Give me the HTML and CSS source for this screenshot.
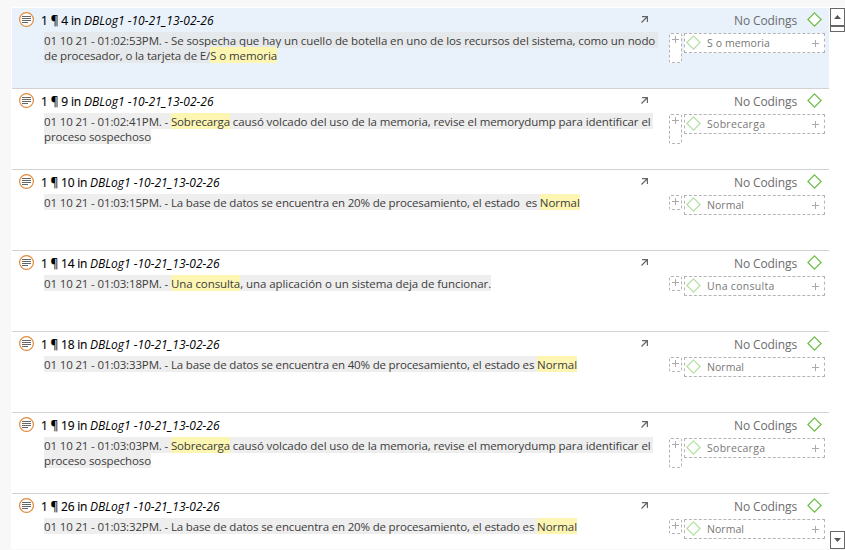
FILE: index.html
```html
<!DOCTYPE html>
<html lang="es">
<head>
<meta charset="utf-8">
<title>DBLog1</title>
<link rel="stylesheet" href="styles.css">
</head>
<body>
<svg class="defs" aria-hidden="true">
  <symbol id="doc" viewBox="0 0 15 15"><circle cx="7.5" cy="7.5" r="6.9" fill="#fff" stroke="#e08a3c" stroke-width="1.2"/><path d="M3 4.5h9M3 6.5h9M3 8.5h9M3 10.5h6" stroke="#666"/></symbol>
  <symbol id="arrow" viewBox="0 0 7 7"><path d="M.5 6.5L6 1M1 .6h5.4V6" fill="none" stroke="#666" stroke-width="1.2"/></symbol>
  <symbol id="diamond" viewBox="0 0 15 15"><path d="M7.5.9l6.6 6.6-6.6 6.6L.9 7.500z" fill="#fff" stroke="currentColor" stroke-width="1.2"/></symbol>
  <symbol id="plus" viewBox="0 0 7 7"><path d="M3.500 0v7M0 3.500h7" stroke="#aaa"/></symbol>
</svg>
<div class="panel">
  <main class="list">
    <article class="row selected">
      <svg class="doc"><use href="#doc"/></svg>
      <div class="body">
        <div class="head"><span class="ref">1 ¶ 4 in </span><i>DBLog1 -10-21_13-02-26</i><svg class="arrow"><use href="#arrow"/></svg></div>
        <div class="line"><span class="stamp">01 10 21 - 01:02:53PM. - </span><span class="wide">Se sospecha que hay un cuello de botella en uno de los recursos del sistema, como un nodo </span></div>
        <div class="line"><span class="stamp">de procesador, o la tarjeta de E/</span><mark class="wide">S o memoria</mark></div>
      </div>
      <div class="side">
        <div class="codings"><span>No Codings</span><svg class="diamond"><use href="#diamond"/></svg></div>
        <div class="codes"><div class="add tall"><svg class="plus"><use href="#plus"/></svg></div><div class="code"><svg class="diamond"><use href="#diamond"/></svg><span class="memoria">S o memoria</span><svg class="plus"><use href="#plus"/></svg></div></div>
      </div>
    </article>
    <article class="row">
      <svg class="doc"><use href="#doc"/></svg>
      <div class="body">
        <div class="head"><span class="ref">1 ¶ 9 in </span><i>DBLog1 -10-21_13-02-26</i><svg class="arrow"><use href="#arrow"/></svg></div>
        <div class="line"><span class="stamp">01 10 21 - 01:02:41PM. - </span><mark class="tight">Sobrecarga</mark><span class="wide"> causó volcado del uso de la memoria, revise el memorydump para identificar el </span></div>
        <div class="line"><span class="mid">proceso sospechoso</span></div>
      </div>
      <div class="side">
        <div class="codings"><span>No Codings</span><svg class="diamond"><use href="#diamond"/></svg></div>
        <div class="codes"><div class="add tall"><svg class="plus"><use href="#plus"/></svg></div><div class="code"><svg class="diamond"><use href="#diamond"/></svg><span>Sobrecarga</span><svg class="plus"><use href="#plus"/></svg></div></div>
      </div>
    </article>
    <article class="row">
      <svg class="doc"><use href="#doc"/></svg>
      <div class="body">
        <div class="head"><span class="ref two">1 ¶ 10 in </span><i>DBLog1 -10-21_13-02-26</i><svg class="arrow"><use href="#arrow"/></svg></div>
        <div class="line"><span class="stamp">01 10 21 - 01:03:15PM. - </span><span class="tight">La base de datos se encuentra en 20% de procesamiento, el estado  es </span><mark class="word">Normal</mark></div>
      </div>
      <div class="side">
        <div class="codings"><span>No Codings</span><svg class="diamond"><use href="#diamond"/></svg></div>
        <div class="codes"><div class="add"><svg class="plus"><use href="#plus"/></svg></div><div class="code"><svg class="diamond"><use href="#diamond"/></svg><span class="normal">Normal</span><svg class="plus"><use href="#plus"/></svg></div></div>
      </div>
    </article>
    <article class="row">
      <svg class="doc"><use href="#doc"/></svg>
      <div class="body">
        <div class="head"><span class="ref two">1 ¶ 14 in </span><i>DBLog1 -10-21_13-02-26</i><svg class="arrow"><use href="#arrow"/></svg></div>
        <div class="line"><span class="stamp">01 10 21 - 01:03:18PM. - </span><mark class="wide">Una consulta</mark><span class="loose">, una aplicación o un sistema deja de funcionar.</span></div>
      </div>
      <div class="side">
        <div class="codings"><span>No Codings</span><svg class="diamond"><use href="#diamond"/></svg></div>
        <div class="codes"><div class="add"><svg class="plus"><use href="#plus"/></svg></div><div class="code"><svg class="diamond"><use href="#diamond"/></svg><span>Una consulta</span><svg class="plus"><use href="#plus"/></svg></div></div>
      </div>
    </article>
    <article class="row">
      <svg class="doc"><use href="#doc"/></svg>
      <div class="body">
        <div class="head"><span class="ref two">1 ¶ 18 in </span><i>DBLog1 -10-21_13-02-26</i><svg class="arrow"><use href="#arrow"/></svg></div>
        <div class="line"><span class="stamp">01 10 21 - 01:03:33PM. - </span><span class="tight">La base de datos se encuentra en 40% de procesamiento, el estado es </span><mark class="word">Normal</mark></div>
      </div>
      <div class="side">
        <div class="codings"><span>No Codings</span><svg class="diamond"><use href="#diamond"/></svg></div>
        <div class="codes"><div class="add"><svg class="plus"><use href="#plus"/></svg></div><div class="code"><svg class="diamond"><use href="#diamond"/></svg><span class="normal">Normal</span><svg class="plus"><use href="#plus"/></svg></div></div>
      </div>
    </article>
    <article class="row">
      <svg class="doc"><use href="#doc"/></svg>
      <div class="body">
        <div class="head"><span class="ref two">1 ¶ 19 in </span><i>DBLog1 -10-21_13-02-26</i><svg class="arrow"><use href="#arrow"/></svg></div>
        <div class="line"><span class="stamp">01 10 21 - 01:03:03PM. - </span><mark class="tight">Sobrecarga</mark><span class="wide"> causó volcado del uso de la memoria, revise el memorydump para identificar el </span></div>
        <div class="line"><span class="mid">proceso sospechoso</span></div>
      </div>
      <div class="side">
        <div class="codings"><span>No Codings</span><svg class="diamond"><use href="#diamond"/></svg></div>
        <div class="codes"><div class="add tall"><svg class="plus"><use href="#plus"/></svg></div><div class="code"><svg class="diamond"><use href="#diamond"/></svg><span>Sobrecarga</span><svg class="plus"><use href="#plus"/></svg></div></div>
      </div>
    </article>
    <article class="row last">
      <svg class="doc"><use href="#doc"/></svg>
      <div class="body">
        <div class="head"><span class="ref two">1 ¶ 26 in </span><i>DBLog1 -10-21_13-02-26</i><svg class="arrow"><use href="#arrow"/></svg></div>
        <div class="line"><span class="stamp">01 10 21 - 01:03:32PM. - </span><span class="tight">La base de datos se encuentra en 20% de procesamiento, el estado es </span><mark class="word">Normal</mark></div>
      </div>
      <div class="side">
        <div class="codings"><span>No Codings</span><svg class="diamond"><use href="#diamond"/></svg></div>
        <div class="codes"><div class="add"><svg class="plus"><use href="#plus"/></svg></div><div class="code"><svg class="diamond"><use href="#diamond"/></svg><span class="normal">Normal</span><svg class="plus"><use href="#plus"/></svg></div></div>
      </div>
    </article>
  </main>
  <div class="scrollbar">
    <div class="up"><svg viewBox="0 0 7 4"><path d="M0 4L3.500 0L7 4z" fill="#555"/></svg></div>
    <div class="thumb"></div>
    <div class="down"><svg viewBox="0 0 7 4"><path d="M0 0L3.500 4L7 0z" fill="#555"/></svg></div>
  </div>
</div>
</body>
</html>
```
FILE: styles.css
```css
* { box-sizing: border-box; }
body {
  margin: 0;
  height: 550px;
  padding: 7px 0 1px 11px;
  overflow: hidden;
  background: #f8f8f8;
  color: #3c3c3c;
  font: 12px/16px "Open Sans", "Noto Sans", sans-serif;
}
svg { display: block; flex: none; }
.defs { position: absolute; width: 0; height: 0; }
.panel { display: flex; height: 542px; padding: 1px 0 0 1px; background: #fff; overflow: hidden; }
.list { width: 817px; }
.row {
  display: flex;
  height: 81px;
  padding: 4px 4px 0 7px;
  border-bottom: 1px solid #d2d2d2;
}
.row.selected { background: #e9f1fb; }
.row.last { border-bottom: 0; height: 55px; }
.doc { width: 15px; height: 15px; }
.body { width: 623px; padding-left: 10px; }
.head {
  display: flex;
  height: 20px;
  margin-left: -3px;
  white-space: pre;
  line-height: 18px;
  color: #000;
}
.ref { width: 43px; letter-spacing: -.16px; -webkit-text-stroke: .15px #000; }
.ref.two { width: 49px; letter-spacing: -.23px; }
.arrow { width: 7px; height: 7px; margin: 4px 9px 0 auto; }
.line { display: flex; height: 15px; white-space: pre; font-size: 11.5px; }
.line span, .line mark { height: 16px; padding-top: 1px; background: #eee; color: inherit; }
.selected .line span { background: #e6e9eb; }
.line mark, .selected .line mark { background: #fdf6b2; }
.stamp { letter-spacing: -.144px; }
.wide { letter-spacing: -.089px; }
.tight { letter-spacing: -.17px; }
.mid { letter-spacing: -.126px; }
.word { letter-spacing: -.036px; }
.loose { letter-spacing: -.065px; }
.side { width: 156px; margin-left: auto; }
.codings {
  display: flex;
  justify-content: flex-end;
  gap: 10px;
  height: 21px;
  padding-right: 3px;
  line-height: 18px;
  letter-spacing: -.11px;
  color: #6c6c6c;
}
.diamond { width: 15px; height: 15px; color: #6bbd45; }
.codes { display: flex; align-items: flex-start; gap: 2px; }
.add {
  width: 13px;
  height: 15px;
  padding: 2px 0 0 2px;
  border: 1px dashed #b4b4b4;
  border-radius: 2px;
  background: #fff;
}
.add.tall { height: 30px; }
.plus { width: 7px; height: 7px; }
.code {
  display: flex;
  width: 141px;
  height: 20px;
  padding: 1px 5px 0 1px;
  border: 1px dashed #b4b4b4;
  background: #fff;
  color: #777;
  font-size: 10.5px;
  letter-spacing: .29px;
}
.code span { margin-left: 6px; line-height: 17px; white-space: pre; }
.code .memoria { letter-spacing: .09px; }
.code .normal { letter-spacing: .05px; }
.code .diamond { color: #b5dfa3; }
.code .plus { margin: 5px 0 0 auto; }
.scrollbar { width: 15px; height: 541px; margin-left: 1px; display: flex; flex-direction: column; }
.up, .down {
  display: flex;
  align-items: center;
  justify-content: center;
  height: 19px;
  border: 1px solid #666;
}
.up { border-bottom-width: 2px; }
.up svg, .down svg { width: 7px; height: 4px; }
.thumb { height: 5px; border: 1px solid #666; border-top: 0; }
.down { margin-top: auto; height: 18px; }
```
